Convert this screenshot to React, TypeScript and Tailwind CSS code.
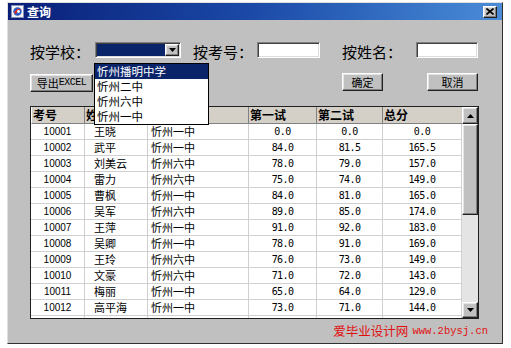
const rows = [
  ["10001", "王晓", "忻州一中", "0.0", "0.0", "0.0"],
  ["10002", "武平", "忻州一中", "84.0", "81.5", "165.5"],
  ["10003", "刘美云", "忻州六中", "78.0", "79.0", "157.0"],
  ["10004", "雷力", "忻州六中", "75.0", "74.0", "149.0"],
  ["10005", "曹枫", "忻州一中", "84.0", "81.0", "165.0"],
  ["10006", "吴军", "忻州六中", "89.0", "85.0", "174.0"],
  ["10007", "王萍", "忻州一中", "91.0", "92.0", "183.0"],
  ["10008", "吴卿", "忻州一中", "78.0", "91.0", "169.0"],
  ["10009", "王玲", "忻州六中", "76.0", "73.0", "149.0"],
  ["10010", "文豪", "忻州六中", "71.0", "72.0", "143.0"],
  ["10011", "梅丽", "忻州一中", "65.0", "64.0", "129.0"],
  ["10012", "高平海", "忻州一中", "73.0", "71.0", "144.0"],
  ["", "", "", "", "", ""],
];

const schools = ["忻州播明中学", "忻州二中", "忻州六中", "忻州一中"];

const raised =
  "border border-t-white border-l-white border-r-[#202020] border-b-[#202020] shadow-[inset_-1px_-1px_0_#808080,inset_1px_1px_0_#e4e4e4]";
const sunken =
  "border border-t-[#808080] border-l-[#808080] border-r-white border-b-white shadow-[inset_1px_1px_0_#404040,inset_-1px_-1px_0_#dcdcdc]";

const Triangle = ({ up }: { up?: boolean }) => (
  <svg width="7" height="4" viewBox="0 0 7 4">
    {up ? <polygon points="0,4 7,4 3.5,0" fill="#000" /> : <polygon points="0,0 7,0 3.5,4" fill="#000" />}
  </svg>
);

const App = () => {
  return (
    <div className="w-[511px] h-[348px] bg-white pl-[7px] pt-[2px] font-['Noto_Sans_CJK_SC',sans-serif]">
      <div className="w-[496px] h-[342px] bg-[#c0c0c0] border border-t-[#dfdfdf] border-l-[#dfdfdf] border-r-[#303030] border-b-[#303030] flex flex-col">

        {/* Title bar */}
        <div className="h-[17px] flex items-center bg-linear-to-r from-[#0a1e78] via-[#1c4aa8] to-[#4a8cd8] pl-[3px] pr-[5px]">
          <svg width="13" height="13" viewBox="0 0 13 13">
            <rect x="0.5" y="0.5" width="12" height="12" fill="#f4f4f4" stroke="#8090b8" />
            <circle cx="6.5" cy="6.5" r="4.2" fill="#2c5cc8" />
            <path d="M3 8 Q6 2 10.5 4.5 Q7 4 5 9 Z" fill="#e02818" />
            <circle cx="7.5" cy="6.5" r="1.4" fill="#fff" />
          </svg>
          <span className="ml-[3px] text-white text-[12px] font-bold leading-none">查询</span>
          <div className="flex-1" />
          <div className={`w-[14px] h-[12px] bg-[#c0c0c0] flex items-center justify-center ${raised}`}>
            <svg width="8" height="7" viewBox="0 0 8 7">
              <path d="M0.5 0.5 L7.5 6.5 M7.5 0.5 L0.5 6.5" stroke="#000" strokeWidth="1.6" />
            </svg>
          </div>
        </div>

        {/* Body */}
        <div className="flex-1 pl-[22px] pt-[22px] flex flex-col">

          {/* Search row */}
          <div className="flex items-center h-[15px] text-[15px] text-black">
            <span className="w-[65px] pt-[3px] leading-none">按学校：</span>
            <div className={`relative w-[86px] h-[16px] flex bg-white p-[1px] ${sunken}`}>
              <div className="flex-1 bg-[#0a246a]" />
              <div className={`w-[14px] bg-[#c0c0c0] flex items-center justify-center ${raised}`}>
                <Triangle />
              </div>
              {/* Open dropdown list */}
              <div className="absolute left-[-2px] top-[20px] w-[115px] border border-black bg-white z-10 flex flex-col">
                {schools.map((s, i) => (
                  <div
                    key={s}
                    className={`h-[15px] pl-[2px] text-[11.5px] leading-[15px] ${i === 0 ? "bg-[#0a246a] text-white" : "text-black"}`}
                  >
                    {s}
                  </div>
                ))}
              </div>
            </div>
            <span className="ml-[12px] w-[64px] pt-[3px] leading-none">按考号：</span>
            <div className={`w-[63px] h-[16px] bg-white ${sunken}`} />
            <span className="ml-[22px] w-[74px] pt-[3px] leading-none">按姓名：</span>
            <div className={`w-[62px] h-[16px] bg-white ${sunken}`} />
          </div>

          {/* Buttons row */}
          <div className="mt-[16px] flex h-[18px] text-[11px] text-black">
            <button className={`w-[63px] h-[18px] mt-[1px] bg-[#c0c0c0] flex items-center justify-center leading-none ${raised}`}>
              导出<span className="font-['Liberation_Mono',monospace] text-[10px] tracking-[-0.5px]">EXCEL</span>
            </button>
            <button className={`ml-[249px] w-[41px] h-[18px] bg-[#c0c0c0] flex items-center justify-center leading-none ${raised}`}>
              确定
            </button>
            <button className={`ml-[44px] w-[51px] h-[18px] bg-[#c0c0c0] flex items-center justify-center leading-none ${raised}`}>
              取消
            </button>
          </div>

          {/* Grid */}
          <div className="mt-[15px] w-[449px] h-[213px] border border-[#202020] flex bg-white">
            <div className="w-[431px] flex flex-col overflow-hidden">
              <div className="flex h-[17px] shrink-0 bg-[#d4d0c8] text-[12px] font-bold text-black leading-[16px]">
                <div className="w-[54px] pl-[1px] border-r border-b border-[#808080] border-l border-l-white">考号</div>
                <div className="w-[63px] pl-[1px] border-r border-b border-[#808080]">姓名</div>
                <div className="w-[101px] pl-[1px] border-r border-b border-[#808080]">学校</div>
                <div className="w-[68px] pl-[1px] border-r border-b border-[#808080]">第一试</div>
                <div className="w-[66px] pl-[1px] border-r border-b border-[#808080]">第二试</div>
                <div className="w-[79px] pl-[1px] border-b border-[#808080]">总分</div>
              </div>
              <div className="flex flex-col h-[194px] overflow-hidden">
                {rows.map((r, i) => (
                  <div key={i} className="flex h-[16px] shrink-0 border-b border-[#d0d0d0] text-black">
                    <div className="w-[54px] border-r border-[#d0d0d0] text-center font-['Liberation_Sans',sans-serif] text-[10px] leading-[15px]">{r[0]}</div>
                    <div className="w-[63px] border-r border-[#d0d0d0] pl-[9px] text-[11px] leading-[15px]">{r[1]}</div>
                    <div className="w-[101px] border-r border-[#d0d0d0] pl-[3px] text-[11px] leading-[15px]">{r[2]}</div>
                    <div className="w-[68px] border-r border-[#d0d0d0] text-center font-['DejaVu_Sans_Mono',monospace] text-[10px] tracking-[-0.6px] leading-[15px]">{r[3]}</div>
                    <div className="w-[66px] border-r border-[#d0d0d0] text-center font-['DejaVu_Sans_Mono',monospace] text-[10px] tracking-[-0.6px] leading-[15px]">{r[4]}</div>
                    <div className="w-[79px] border-r border-[#d0d0d0] text-center font-['DejaVu_Sans_Mono',monospace] text-[10px] tracking-[-0.6px] leading-[15px]">{r[5]}</div>
                  </div>
                ))}
              </div>
            </div>

            {/* Scrollbar */}
            <div className="w-[16px] flex flex-col bg-[#e4e4e4]">
              <div className={`h-[17px] bg-[#c0c0c0] flex items-center justify-center ${raised}`}>
                <Triangle up />
              </div>
              <div className={`h-[91px] bg-[#c0c0c0] ${raised}`} />
              <div className="flex-1" />
              <div className={`h-[16px] bg-[#c0c0c0] flex items-center justify-center ${raised}`}>
                <Triangle />
              </div>
            </div>
          </div>

          {/* Watermark */}
          <div className="mt-[5px] w-[458px] h-[14px] flex justify-end items-center text-[#e01010] leading-none">
            <span className="text-[12.5px]">爱毕业设计网</span>
            <span className="ml-[4px] font-['Liberation_Mono',monospace] text-[10.5px]">www.2bysj.cn</span>
          </div>
        </div>
      </div>
    </div>
  );
};

export default App;
